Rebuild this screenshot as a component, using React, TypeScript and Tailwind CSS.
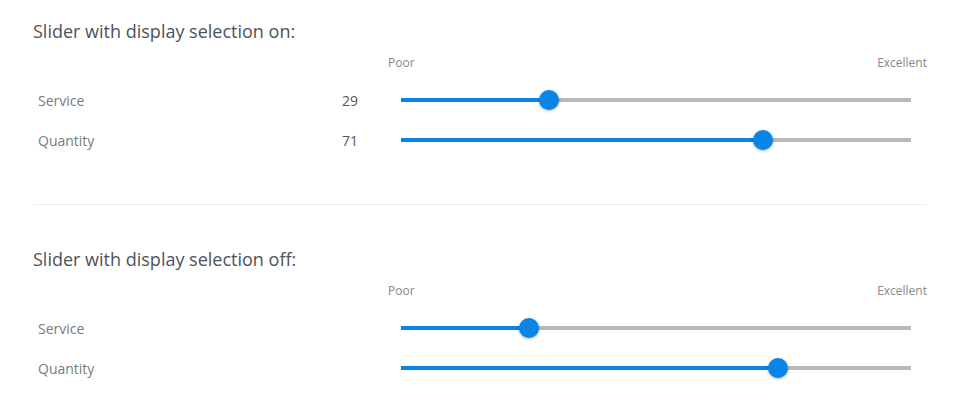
import React from 'react';

interface Rating {
  label: string;
  value: number;
}

const Slider: React.FC<{ value: number }> = ({ value }) => (
  <div className="relative h-10 flex items-center pl-[11px] pr-[16px]">
    <div className="relative w-full h-[4px] bg-[#b8b8b8]">
      <div className="absolute left-0 top-0 h-full bg-[#0a85e6]" style={{ width: `${value}%` }} />
      <div
        className="absolute top-1/2 w-5 h-5 -ml-[10px] -mt-[10px] rounded-full bg-[#0a85e6] shadow-[0_1px_3px_rgba(0,0,0,0.3)]"
        style={{ left: `${value}%` }}
      />
    </div>
  </div>
);

const Section: React.FC<{ title: string; ratings: Rating[]; showValue: boolean }> = ({
  title,
  ratings,
  showValue,
}) => (
  <div>
    <h2 className="text-[18px] leading-6 text-[#4d5358]">{title}</h2>
    <div className="grid grid-cols-[325px_1fr] gap-x-8 mt-3">
      <div />
      <div className="flex justify-between text-[12px] leading-4 text-[#888] -ml-[2px]">
        <span>Poor</span>
        <span>Excellent</span>
      </div>
    </div>
    <div className="mt-[9px]">
      {ratings.map((r) => (
        <div key={r.label} className="grid grid-cols-[325px_1fr] gap-x-8 items-center">
          <div className="flex items-center justify-between pl-[5px] text-[14px]">
            <span className="text-[#7b7b7b]">{r.label}</span>
            {showValue && <span className="text-[#555]">{r.value}</span>}
          </div>
          <Slider value={r.value} />
        </div>
      ))}
    </div>
  </div>
);

export default function App() {
  return (
    <div
      className="w-[960px] h-[407px] bg-white px-[33px] pt-[19px] overflow-hidden"
      style={{ fontFamily: '"Open Sans", "Noto Sans", sans-serif' }}
    >
      <Section
        title="Slider with display selection on:"
        showValue
        ratings={[
          { label: 'Service', value: 29 },
          { label: 'Quantity', value: 71 },
        ]}
      />
      <div className="mt-[44px] h-px bg-[#ececec]" />
      <div className="mt-[42px]">
        <Section
          title="Slider with display selection off:"
          showValue={false}
          ratings={[
            { label: 'Service', value: 25 },
            { label: 'Quantity', value: 74 },
          ]}
        />
      </div>
    </div>
  );
}
